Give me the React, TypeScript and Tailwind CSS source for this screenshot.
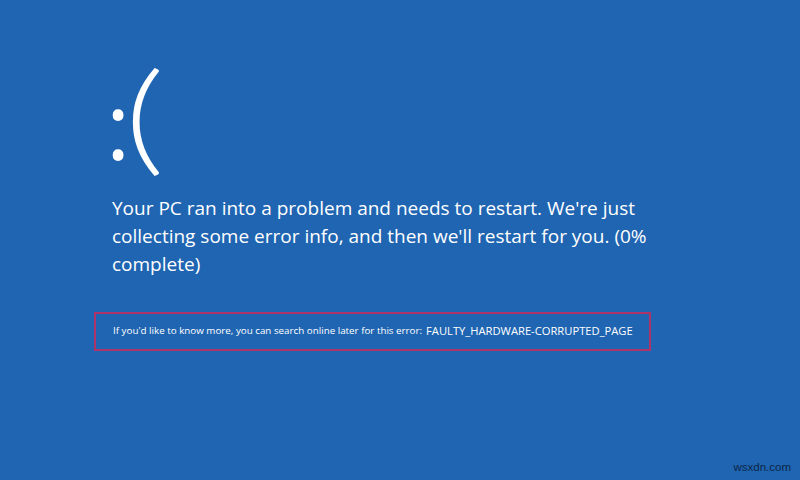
import React from 'react';

const App: React.FC = () => {
  return (
    <div className="relative w-[800px] h-[480px] overflow-hidden bg-[#1f65b2] text-white font-['Open_Sans',sans-serif]">
      <div className="pl-[94px] pt-[53px]">
        {/* sad face */}
        <div className="flex items-baseline pl-[12px] leading-none">
          <span className="text-[92px] font-normal">:</span>
          <span className="inline-block -ml-[1px] text-[121px] font-light font-['Lato',sans-serif] scale-x-[1.3]">(</span>
        </div>

        <p className="mt-[20px] pl-[18px] text-[19px] leading-[28px] whitespace-nowrap">
          Your PC ran into a problem and needs to restart. We're just
          <br />
          collecting some error info, and then we'll restart for you. (0%
          <br />
          complete)
        </p>

        <div className="mt-[34px] w-[557px] h-[39px] border-2 border-[#ad3466] flex items-center pl-[17px] whitespace-nowrap">
          <span className="text-[9.8px]">If you'd like to know more, you can search online later for this error:</span>
          <span className="ml-[4px] text-[11.2px]">FAULTY_HARDWARE-CORRUPTED_PAGE</span>
        </div>
      </div>

      <div className="absolute right-[9px] bottom-[4px] text-[11.5px] text-[#0c2748] font-['Liberation_Sans',sans-serif]">
        wsxdn.com
      </div>
    </div>
  );
};

export default App;
